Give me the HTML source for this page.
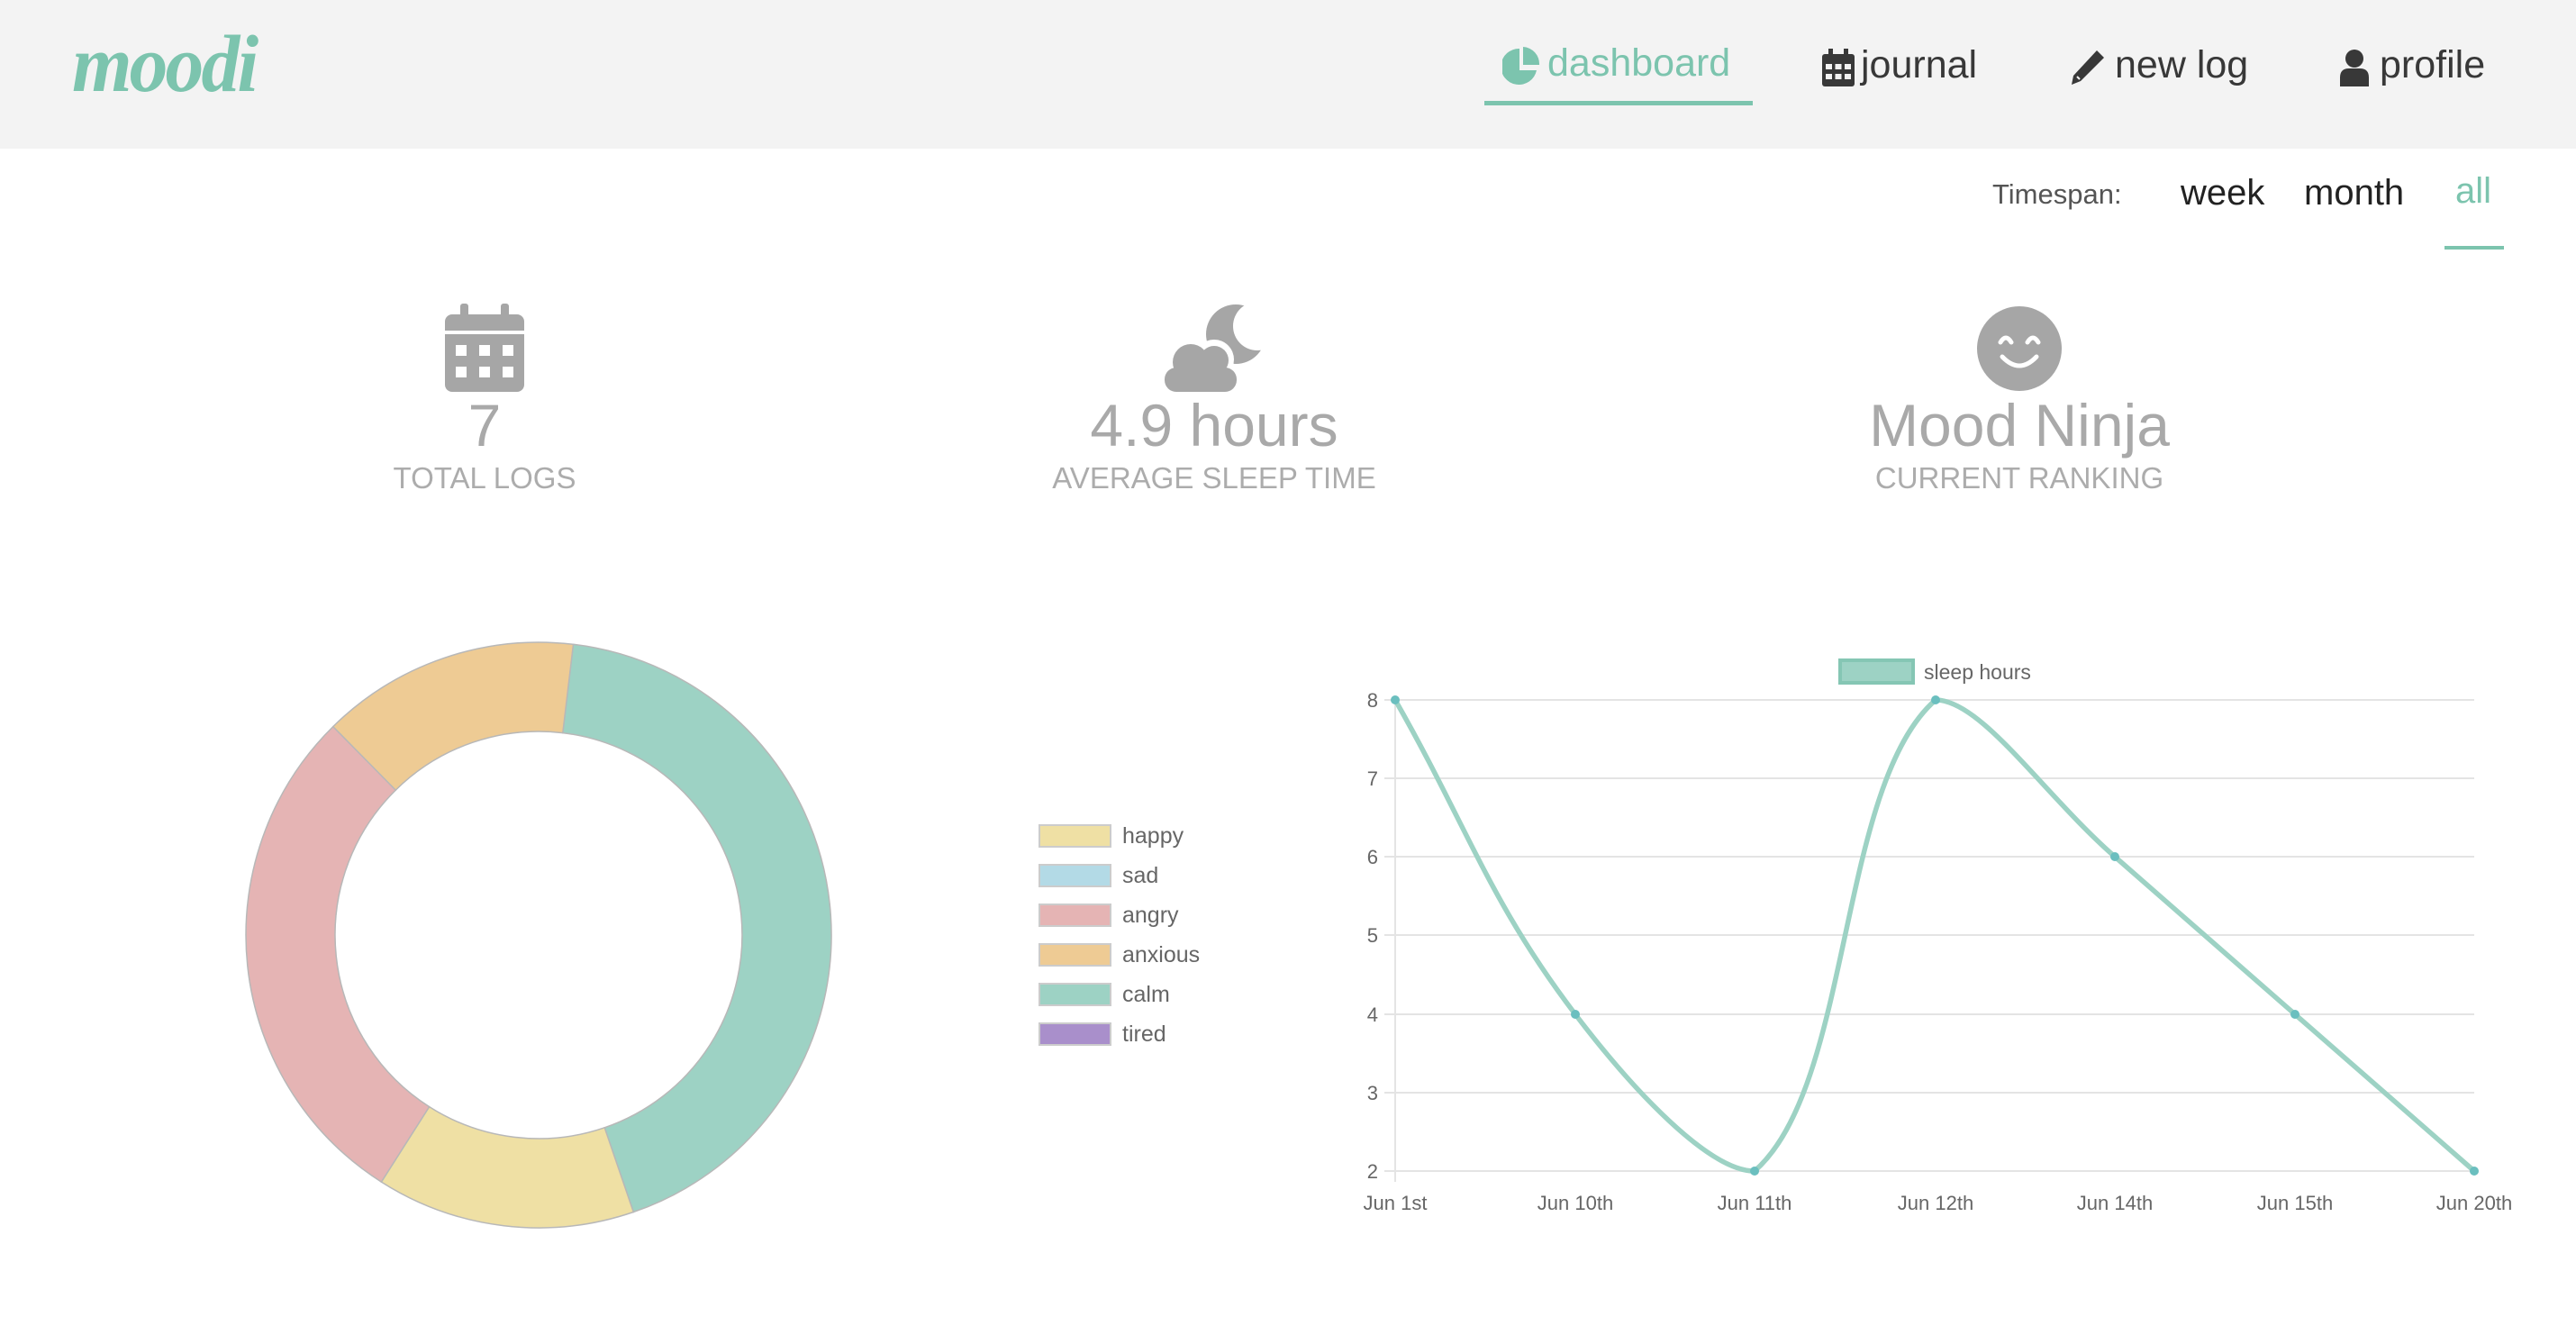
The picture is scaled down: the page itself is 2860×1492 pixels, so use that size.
<!DOCTYPE html>
<html><head><meta charset="utf-8"><style>
*{margin:0;padding:0;box-sizing:border-box}
body{width:2860px;height:1492px;background:#fff;font-family:"Liberation Sans",sans-serif;position:relative;overflow:hidden}
.hdr{position:absolute;left:0;top:0;width:2860px;height:165px;background:#f3f3f3}
.t{position:absolute;white-space:nowrap}
</style></head><body>
<div class="hdr"></div>
<div class="t" style="left:80px;top:20px;font-family:'Liberation Serif',serif;font-style:italic;font-weight:bold;font-size:90px;color:#7cc4ae;letter-spacing:-3px;transform:scaleX(0.95);transform-origin:left">moodi</div>

<svg class="t" style="left:1668px;top:52px" width="42" height="44" viewBox="0 0 42 44"><path d="M19 2 A20 20 0 1 0 38 26 L19 26 Z" fill="#7cc4ae"/><path d="M23 0 A19 19 0 0 1 41 20 L23 20 Z" fill="#7cc4ae"/></svg>
<div class="t" style="left:1718px;top:46px;font-size:43px;color:#7cc4ae">dashboard</div>
<div class="t" style="left:1648px;top:112px;width:298px;height:5px;background:#7cc4ae"></div>

<svg class="t" style="left:2023px;top:54px" width="36" height="42" viewBox="0 0 36 42"><rect x="0" y="6" width="36" height="36" rx="3" fill="#383838"/><rect x="7" y="0" width="5" height="10" fill="#383838"/><rect x="24" y="0" width="5" height="10" fill="#383838"/><g fill="#f3f3f3"><rect x="4" y="17" width="7" height="6"/><rect x="14.5" y="17" width="7" height="6"/><rect x="25" y="17" width="7" height="6"/><rect x="4" y="28" width="7" height="6"/><rect x="14.5" y="28" width="7" height="6"/><rect x="25" y="28" width="7" height="6"/></g></svg>
<div class="t" style="left:2066px;top:48px;font-size:43px;color:#383838">journal</div>

<svg class="t" style="left:2298px;top:54px" width="40" height="42" viewBox="0 0 40 42"><path d="M30 2 L38 10 L12 36 L2 40 L4 30 Z" fill="#383838"/><path d="M8 31 L11 34" stroke="#f3f3f3" stroke-width="2"/></svg>
<div class="t" style="left:2348px;top:48px;font-size:43px;color:#383838">new log</div>

<svg class="t" style="left:2596px;top:54px" width="36" height="42" viewBox="0 0 36 42"><circle cx="18" cy="11" r="10" fill="#383838"/><path d="M2 42 L2 32 Q2 22 12 22 L24 22 Q34 22 34 32 L34 42 Z" fill="#383838"/></svg>
<div class="t" style="left:2642px;top:48px;font-size:43px;color:#383838">profile</div>

<div class="t" style="left:2212px;top:198px;font-size:31px;color:#555">Timespan:</div>
<div class="t" style="left:2421px;top:192px;font-size:40px;color:#222">week</div>
<div class="t" style="left:2558px;top:192px;font-size:40px;color:#222">month</div>
<div class="t" style="left:2726px;top:190px;font-size:40px;color:#7cc4ae">all</div>
<div class="t" style="left:2714px;top:273px;width:66px;height:4px;background:#7cc4ae"></div>

<svg class="t" style="left:494px;top:337px" width="88" height="98" viewBox="0 0 88 98"><rect x="0" y="12" width="88" height="86" rx="8" fill="#a6a6a6"/><rect x="17" y="0" width="9" height="20" rx="3" fill="#a6a6a6"/><rect x="62" y="0" width="9" height="20" rx="3" fill="#a6a6a6"/><rect x="0" y="30" width="88" height="4" fill="#fff"/><g fill="#fff"><rect x="12" y="46" width="12" height="12"/><rect x="38" y="46" width="12" height="12"/><rect x="64" y="46" width="12" height="12"/><rect x="12" y="70" width="12" height="12"/><rect x="38" y="70" width="12" height="12"/><rect x="64" y="70" width="12" height="12"/></g></svg>
<div class="t" style="left:438px;top:434px;width:200px;text-align:center;font-size:66px;color:#a9a9a9">7</div>
<div class="t" style="left:338px;top:512px;width:400px;text-align:center;font-size:33px;color:#acacac">TOTAL LOGS</div>

<svg class="t" style="left:1292px;top:336px" width="112" height="100" viewBox="0 0 112 100">
<defs><mask id="mm"><rect width="112" height="100" fill="#fff"/><circle cx="104" cy="26" r="27" fill="#000"/></mask></defs>
<circle cx="80" cy="35" r="33" fill="#a6a6a6" mask="url(#mm)"/>
<g fill="#fff"><circle cx="30" cy="66" r="26"/><circle cx="56" cy="63" r="22"/><rect x="-4" y="66" width="92" height="37" rx="18"/></g>
<g fill="#a6a6a6"><circle cx="30" cy="66" r="20"/><circle cx="56" cy="64" r="16"/><rect x="1" y="72" width="80" height="27" rx="13"/></g>
</svg>
<div class="t" style="left:1048px;top:434px;width:600px;text-align:center;font-size:66px;color:#a9a9a9">4.9 hours</div>
<div class="t" style="left:1048px;top:512px;width:600px;text-align:center;font-size:33px;color:#acacac">AVERAGE SLEEP TIME</div>

<svg class="t" style="left:2195px;top:340px" width="94" height="94" viewBox="0 0 94 94"><circle cx="47" cy="47" r="47" fill="#a6a6a6"/><g fill="none" stroke="#fff" stroke-width="5" stroke-linecap="round"><path d="M26 40 Q32 30 38 40"/><path d="M56 40 Q62 30 68 40"/><path d="M28 56 Q47 76 66 56"/></g></svg>
<div class="t" style="left:1942px;top:434px;width:600px;text-align:center;font-size:66px;color:#a9a9a9">Mood Ninja</div>
<div class="t" style="left:1942px;top:512px;width:600px;text-align:center;font-size:33px;color:#acacac">CURRENT RANKING</div>

<svg class="t" style="left:0;top:0" width="2860" height="1492" viewBox="0 0 2860 1492">
<g stroke="#b8b8b8" stroke-width="1.5">
<path d="M636.5 715.3 A325 325 0 0 1 703.3 1345.5 L671.2 1251.8 A226 226 0 0 0 624.8 813.6 Z" fill="#9dd2c4"/>
<path d="M703.3 1345.5 A325 325 0 0 1 423.4 1312.1 L476.6 1228.6 A226 226 0 0 0 671.2 1251.8 Z" fill="#efe0a4"/>
<path d="M423.4 1312.1 A325 325 0 0 1 369.8 806.6 L439.3 877.1 A226 226 0 0 0 476.6 1228.6 Z" fill="#e5b4b4"/>
<path d="M369.8 806.6 A325 325 0 0 1 636.5 715.3 L624.8 813.6 A226 226 0 0 0 439.3 877.1 Z" fill="#eecb94"/>
</g>
<g stroke="#ccc" stroke-width="2">
<rect x="1154" y="916" width="79" height="24" fill="#efe0a4"/>
<rect x="1154" y="960" width="79" height="24" fill="#b3dae6"/>
<rect x="1154" y="1004" width="79" height="24" fill="#e5b4b4"/>
<rect x="1154" y="1048" width="79" height="24" fill="#eecb94"/>
<rect x="1154" y="1092" width="79" height="24" fill="#9dd2c4"/>
<rect x="1154" y="1136" width="79" height="24" fill="#a98fcb"/>
</g>
<g font-family="Liberation Sans, sans-serif" font-size="25" fill="#666">
<text x="1246" y="936">happy</text><text x="1246" y="980">sad</text><text x="1246" y="1024">angry</text><text x="1246" y="1068">anxious</text><text x="1246" y="1112">calm</text><text x="1246" y="1156">tired</text>
</g>
<g stroke="#e4e4e4" stroke-width="2">
<path d="M1537 777H2747M1537 864H2747M1537 951H2747M1537 1038H2747M1537 1126H2747M1537 1213H2747M1537 1300H2747M1549 777V1312"/>
</g>
<g font-family="Liberation Sans, sans-serif" font-size="22" fill="#666" text-anchor="end">
<text x="1530" y="785">8</text><text x="1530" y="872">7</text><text x="1530" y="959">6</text><text x="1530" y="1046">5</text><text x="1530" y="1134">4</text><text x="1530" y="1221">3</text><text x="1530" y="1308">2</text>
</g>
<g font-family="Liberation Sans, sans-serif" font-size="22" fill="#666" text-anchor="middle">
<text x="1549" y="1343">Jun 1st</text><text x="1749" y="1343">Jun 10th</text><text x="1948" y="1343">Jun 11th</text><text x="2149" y="1343">Jun 12th</text><text x="2348" y="1343">Jun 14th</text><text x="2548" y="1343">Jun 15th</text><text x="2747" y="1343">Jun 20th</text>
</g>
<rect x="2043" y="733" width="81" height="25" fill="#9dd2c4" stroke="#85c6b4" stroke-width="4"/>
<text x="2136" y="754" font-family="Liberation Sans, sans-serif" font-size="23" fill="#666">sleep hours</text>
<path d="M1549,777 C1629,917 1653,1000 1749,1126 C1812,1209 1897,1300 1948,1300 C2057,1205 2040,872 2149,777 C2200,777 2269,882 2348,951 C2428,1021 2468,1056 2548,1126 C2627,1195 2667,1230 2747,1300" fill="none" stroke="#9dd2c4" stroke-width="5.5"/>
<g fill="#6bbfbf"><circle cx="1549" cy="777" r="5"/><circle cx="1749" cy="1126" r="5"/><circle cx="1948" cy="1300" r="5"/><circle cx="2149" cy="777" r="5"/><circle cx="2348" cy="951" r="5"/><circle cx="2548" cy="1126" r="5"/><circle cx="2747" cy="1300" r="5"/></g>
</svg>
</body></html>
